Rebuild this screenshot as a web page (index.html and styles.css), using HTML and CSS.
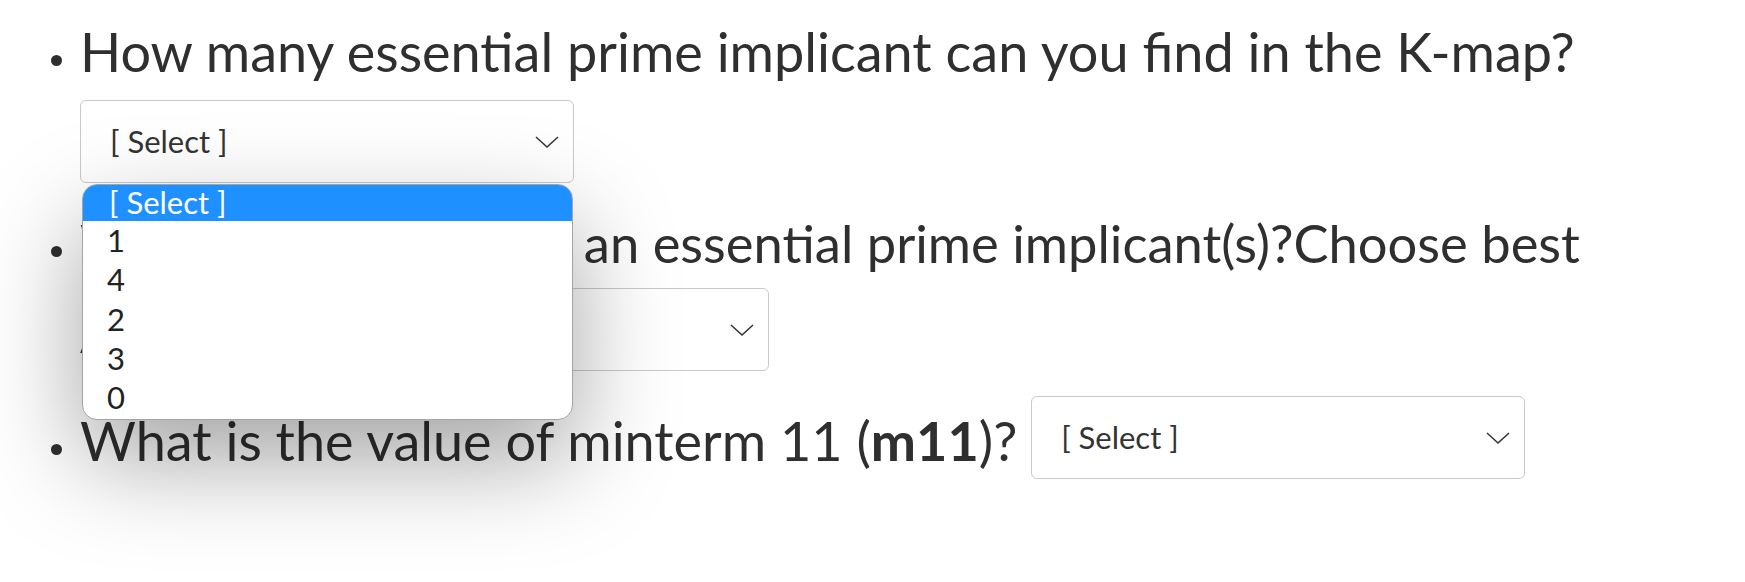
FILE: index.html
```html
<!DOCTYPE html>
<html lang="en">
<head>
<meta charset="utf-8">
<title>K-map questions</title>
<link rel="stylesheet" href="styles.css">
</head>
<body>
<ul class="questions">
  <li class="question">How many essential prime implicant can you find in the K-map? <span class="select-wrap"><span class="select"><span class="select-text">[ Select ]</span><svg class="chevron" viewBox="0 0 24 12" width="24" height="12"><path d="M1 1 L12 11 L23 1" fill="none" stroke="#333" stroke-width="1.5"/></svg></span><span class="options"><span class="option option-active">[ Select ]</span><span class="option">1</span><span class="option">4</span><span class="option">2</span><span class="option">3</span><span class="option">0</span></span></span></li>
  <li class="question"><span class="small-text"><span class="tight">Which of the items are</span> an essential prime implicant(s)?Choose best <span class="tight-more">Answer:</span> </span><span class="select"><span class="select-text">[ Select ]</span><svg class="chevron" viewBox="0 0 24 12" width="24" height="12"><path d="M1 1 L12 11 L23 1" fill="none" stroke="#333" stroke-width="1.5"/></svg></span></li>
  <li class="question">What is the value of minterm 11 (<b>m11</b>)? <span class="select"><span class="select-text">[ Select ]</span><svg class="chevron" viewBox="0 0 24 12" width="24" height="12"><path d="M1 1 L12 11 L23 1" fill="none" stroke="#333" stroke-width="1.5"/></svg></span></li>
</ul>
</body>
</html>
```
FILE: styles.css
```css
html, body {
  margin: 0;
  background: #ffffff;
}
body {
  font-family: Lato, "Open Sans", sans-serif;
  font-size: 54px;
  color: #2f2f2f;
  overflow: hidden;
  height: 582px;
}
.questions {
  margin: 0;
  padding: 12px 0 0 80px;
  line-height: 80px;
  list-style: disc;
}
.question {
  margin-bottom: 15px;
}
.question::marker {
  font-size: 33px;
}
.question b {
  font-weight: 700;
}
.small-text {
  font-size: 52.5px;
}
.tight {
  letter-spacing: -1.5px;
}
.tight-more {
  letter-spacing: -1px;
}
.select-wrap {
  position: relative;
  display: inline-block;
  vertical-align: 12px;
  line-height: 1;
}
.select {
  display: inline-flex;
  align-items: center;
  justify-content: space-between;
  box-sizing: border-box;
  width: 494px;
  height: 83px;
  margin: 5px 0;
  padding: 0 14px 0 29px;
  border: 1px solid #c9c9c9;
  border-radius: 6px;
  background: #ffffff;
  vertical-align: 12px;
  font-size: 31px;
  line-height: 1;
  color: #333333;
}
.select-wrap .select {
  vertical-align: baseline;
  margin-top: 8px;
}
.chevron {
  display: block;
  flex: none;
}
.options {
  position: absolute;
  left: 2px;
  top: 92px;
  width: 491px;
  box-sizing: border-box;
  display: flex;
  flex-direction: column;
  padding-bottom: 2px;
  border: 1px solid #a4a4a4;
  border-radius: 15px;
  overflow: hidden;
  background: #ffffff;
  box-shadow: 0 40px 100px rgba(0, 0, 0, 0.36);
  font-size: 31px;
  z-index: 2;
}
.option {
  display: block;
  height: 39.3px;
  line-height: 38px;
  padding-left: 24px;
  color: #222222;
}
.option-active {
  background: #1e90ff;
  color: #ffffff;
  height: 36px;
  line-height: 34px;
  padding-left: 26px;
}
```
